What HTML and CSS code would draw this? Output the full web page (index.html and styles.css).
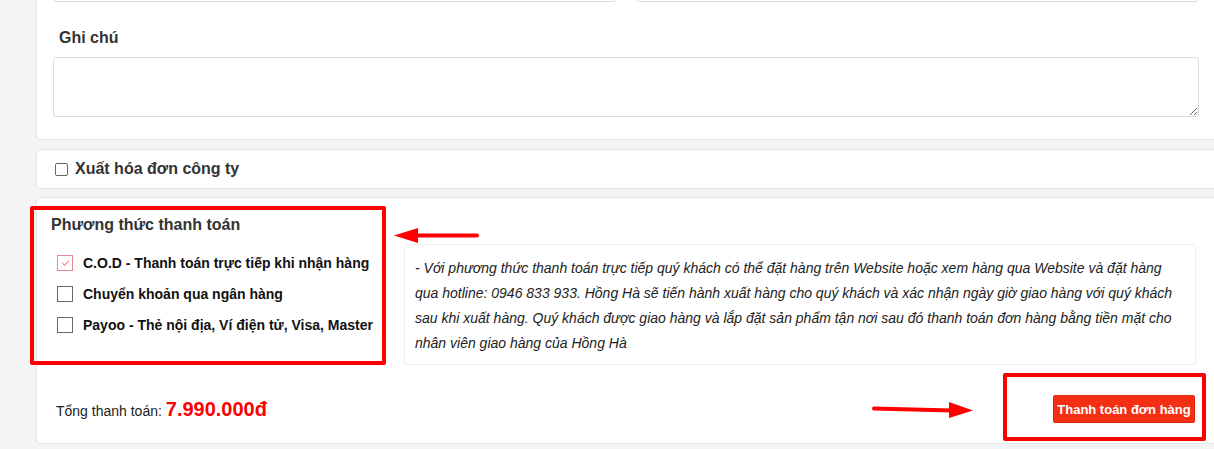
FILE: index.html
```html
<!DOCTYPE html>
<html lang="vi">
<head>
    <meta charset="UTF-8">
    <meta name="viewport" content="width=device-width, initial-scale=1.0">
    <title>Thanh toán</title>
    <link rel="stylesheet" href="styles.css">
</head>
<body>
    <div class="page">
        <div class="card card-info">
            <div class="input-row">
                <input class="field" type="text">
                <input class="field" type="text">
            </div>
            <label class="label">Ghi chú</label>
            <textarea class="note"></textarea>
        </div>

        <div class="card card-invoice">
            <span class="box"></span>
            <span class="invoice-text">Xuất hóa đơn công ty</span>
        </div>

        <div class="card card-pay">
            <div class="pay-grid">
                <div class="methods">
                    <h3 class="title">Phương thức thanh toán</h3>
                    <ul class="options">
                        <li class="option"><span class="box checked"></span>C.O.D - Thanh toán trực tiếp khi nhận hàng</li>
                        <li class="option"><span class="box"></span>Chuyển khoản qua ngân hàng</li>
                        <li class="option"><span class="box"></span>Payoo - Thẻ nội địa, Ví điện tử, Visa, Master</li>
                    </ul>
                </div>
                <div class="desc">
                    - Với phương thức thanh toán trực tiếp quý khách có thể đặt hàng trên Website hoặc xem hàng qua Website và đặt hàng qua hotline: 0946 833 933. Hồng Hà sẽ tiến hành xuất hàng cho quý khách và xác nhận ngày giờ giao hàng với quý khách sau khi xuất hàng. Quý khách được giao hàng và lắp đặt sản phẩm tận nơi sau đó thanh toán đơn hàng bằng tiền mặt cho nhân viên giao hàng của Hồng Hà
                </div>
            </div>
            <div class="total-row">
                <div class="total">Tổng thanh toán: <span class="price">7.990.000đ</span></div>
                <button class="btn-pay">Thanh toán đơn hàng</button>
            </div>
        </div>
    </div>

    <!-- annotation marks drawn over the screenshot -->
    <div class="mark mark-methods"></div>
    <div class="mark mark-button"></div>
    <svg class="arrows" width="1214" height="449" viewBox="0 0 1214 449">
        <line x1="477" y1="235.5" x2="414" y2="235.5" stroke="#ff0000" stroke-width="4" stroke-linecap="round"/>
        <polygon points="394,235.5 418,228 418,243" fill="#ff0000"/>
        <line x1="874" y1="408.5" x2="952" y2="410.5" stroke="#ff0000" stroke-width="4" stroke-linecap="round"/>
        <polygon points="973,410.5 949,402 949,418" fill="#ff0000"/>
    </svg>
</body>
</html>
```

FILE: styles.css
```css
body {
    margin: 0;
    background: #f4f4f4;
    font-family: "Liberation Sans", Arial, sans-serif;
    color: #222;
    overflow: hidden;
    position: relative;
    height: 449px;
}
.page {
    margin-top: -43px;
    margin-left: 36px;
    width: 1190px;
}
.card {
    background: #fff;
    border: 1px solid #e4e4e4;
    border-radius: 4px;
    box-sizing: border-box;
}
.card-info {
    padding: 10px 26px 22px 16px;
}
.input-row {
    display: grid;
    grid-template-columns: 1fr 1fr;
    gap: 20px;
}
.field {
    height: 34px;
    box-sizing: border-box;
    border: 1px solid #ddd;
    border-radius: 3px;
    margin: 0;
}
.label {
    display: block;
    margin-top: 26px;
    padding-left: 6px;
    font-size: 16px;
    line-height: 20px;
    font-weight: bold;
    color: #333;
}
.note {
    display: block;
    margin-top: 9px;
    width: 100%;
    height: 60px;
    box-sizing: border-box;
    border: 1px solid #ddd;
    border-radius: 3px;
    resize: vertical;
}
.card-invoice {
    margin-top: 9px;
    height: 40px;
    display: flex;
    align-items: center;
    padding-left: 18px;
}
.card-invoice .box {
    width: 13px;
    height: 13px;
    border-color: #666;
    border-radius: 2px;
    margin-right: 7px;
}
.invoice-text {
    font-size: 16px;
    font-weight: bold;
    color: #333;
}
.card-pay {
    margin-top: 8px;
    padding: 17px 30px 20px 14px;
}
.pay-grid {
    display: grid;
    grid-template-columns: 353px 792px;
    align-items: start;
}
.title {
    margin: 0;
    font-size: 16px;
    line-height: 20px;
    color: #333;
}
.options {
    list-style: none;
    margin: 12px 0 0;
    padding: 0 0 0 6px;
}
.option {
    height: 31px;
    display: flex;
    align-items: center;
    font-size: 14px;
    font-weight: bold;
    color: #111;
}
.box {
    display: inline-block;
    width: 16px;
    height: 16px;
    border: 1px solid #666;
    box-sizing: border-box;
    margin-right: 10px;
    position: relative;
    flex-shrink: 0;
}
.box.checked {
    border-color: #ec8592;
}
.box.checked::after {
    content: "";
    position: absolute;
    left: 4px;
    top: 4px;
    width: 6px;
    height: 3px;
    border-left: 1px solid #ec8592;
    border-bottom: 1px solid #ec8592;
    transform: rotate(-45deg);
}
.desc {
    margin-top: 29px;
    border: 1px solid #ececec;
    border-radius: 3px;
    padding: 11px 12px 8px 10px;
    font-size: 14px;
    line-height: 25px;
    font-style: italic;
    color: #222;
}
.total-row {
    margin-top: 30px;
    display: flex;
    justify-content: space-between;
    align-items: center;
    padding-left: 5px;
    height: 28px;
}
.total {
    font-size: 14px;
    color: #222;
}
.price {
    font-size: 20px;
    font-weight: bold;
    color: #ff0000;
}
.btn-pay {
    width: 142px;
    height: 28px;
    border: 1px solid #e0290f;
    border-radius: 2px;
    background: #f52f14;
    color: #fff;
    font-family: "Liberation Sans", Arial, sans-serif;
    font-size: 13px;
    font-weight: bold;
    padding: 0;
    cursor: pointer;
}
.mark {
    position: absolute;
    border: 4px solid #ff0000;
    border-radius: 2px;
    box-sizing: border-box;
}
.mark-methods {
    left: 30px;
    top: 206px;
    width: 356px;
    height: 159px;
}
.mark-button {
    left: 1003px;
    top: 373px;
    width: 203px;
    height: 68px;
}
.arrows {
    position: absolute;
    left: 0;
    top: 0;
}
```
